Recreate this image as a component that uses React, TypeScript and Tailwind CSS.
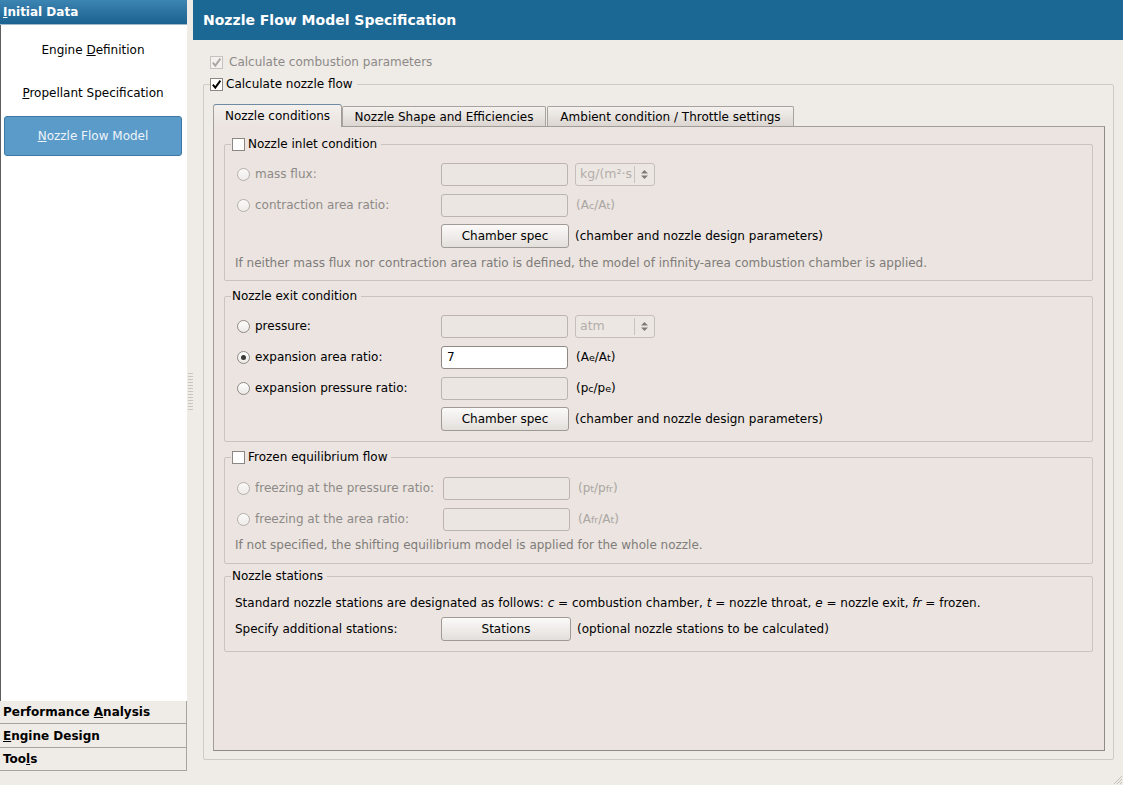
import React from "react";

function Check({ checked = false, disabled = false }: { checked?: boolean; disabled?: boolean }) {
  return (
    <span
      className={`inline-flex shrink-0 items-center justify-center w-[13px] h-[13px] border ${
        disabled ? "border-[#c6c2be] bg-[#f3f1ef]" : "border-[#8c8782] bg-white"
      }`}
    >
      {checked && (
        <svg width="11" height="11" viewBox="0 0 11 11">
          <path
            d="M1.8 5.6 L4.3 8.6 L9.4 1.6"
            fill="none"
            stroke={disabled ? "#aaa6a2" : "#000"}
            strokeWidth="1.9"
          />
        </svg>
      )}
    </span>
  );
}

function Radio({ checked = false, disabled = false }: { checked?: boolean; disabled?: boolean }) {
  return (
    <span
      className={`ml-[2px] inline-flex shrink-0 items-center justify-center w-[13px] h-[13px] rounded-full border ${
        disabled
          ? "border-[#b4afaa] bg-gradient-to-b from-[#fbfaf9] to-[#eeebe8]"
          : "border-[#8e8984] bg-gradient-to-b from-white to-[#ece9e6]"
      }`}
    >
      {checked && <span className="w-[5px] h-[5px] rounded-full bg-[#3a3a3a]" />}
    </span>
  );
}

function Field({ value = "", disabled = true, w = "w-[127px]" }: { value?: string; disabled?: boolean; w?: string }) {
  return (
    <div
      className={`${w} h-[23px] rounded-[3px] border flex items-center px-[5px] text-[12px] ${
        disabled ? "border-[#bab5b0] bg-[#ebe6e2]" : "border-[#8f8a85] bg-white text-black"
      }`}
    >
      {value}
    </div>
  );
}

function Btn({ label, w = "w-[128px]" }: { label: string; w?: string }) {
  return (
    <div
      className={`${w} h-[24px] rounded-[3px] border border-[#9f9a95] bg-gradient-to-b from-[#fbfaf9] to-[#e3dfdb] flex items-center justify-center text-black`}
    >
      {label}
    </div>
  );
}

function Combo({ text }: { text: string }) {
  return (
    <div className="ml-[7px] w-[80px] h-[23px] rounded-[3px] border border-[#c4bfba] bg-[#ece7e3] flex items-center text-[#b3aeaa]">
      <span className="pl-[4px] w-[58px] whitespace-nowrap text-[12.5px]">{text}</span>
      <span className="w-px h-[17px] bg-[#c9c4bf]" />
      <span className="flex-1 flex items-center justify-center">
        <svg width="9" height="11" viewBox="0 0 9 11">
          <path d="M1 4.5 L4.5 1 L8 4.5 Z" fill="#7f7a76" />
          <path d="M1 6.5 L4.5 10 L8 6.5 Z" fill="#7f7a76" />
        </svg>
      </span>
    </div>
  );
}

function Sub({ children }: { children: React.ReactNode }) {
  return <span className="text-[9.5px]">{children}</span>;
}

function RadioLabel({ label, checked = false, disabled = true, w = "w-[206px]" }: { label: string; checked?: boolean; disabled?: boolean; w?: string }) {
  return (
    <div className={`${w} flex items-center gap-[5px] ${disabled ? "text-[#8d8a87]" : "text-black"}`}>
      <Radio checked={checked} disabled={disabled} />
      <span>{label}</span>
    </div>
  );
}

function Group({ title, checkbox = false, children, className = "" }: { title: string; checkbox?: boolean; children: React.ReactNode; className?: string }) {
  return (
    <fieldset className={`border border-[#cac4bf] rounded-[2px] ${className}`}>
      <legend className="ml-[6px] pl-[1px] pr-[4px] leading-[16px]">
        <span className="flex items-center gap-[3px] text-black">
          {checkbox && <Check />}
          <span>{title}</span>
        </span>
      </legend>
      {children}
    </fieldset>
  );
}

export default function App() {
  return (
    <div className="w-[1123px] h-[785px] flex bg-[#efebe7] text-[12px] leading-[16px] font-['DejaVu_Sans',sans-serif] text-black overflow-hidden">
      {/* Sidebar */}
      <div className="w-[187px] flex flex-col">
        <div className="h-[25px] bg-gradient-to-b from-[#3c84b2] to-[#1a6291] border-b border-[#9fb8cb] flex items-center pl-[3px] text-white font-bold">
          <span>
            <span className="underline">I</span>nitial Data
          </span>
        </div>
        <div className="h-[676px] bg-white border-l border-[#5e5e5e] flex flex-col gap-[4px] pt-[5px] pl-[3px] pr-[5px]">
          <div className="h-[39px] flex items-center justify-center text-black">
            <span>
              Engine <span className="underline">D</span>efinition
            </span>
          </div>
          <div className="h-[39px] flex items-center justify-center text-black">
            <span>
              <span className="underline">P</span>ropellant Specification
            </span>
          </div>
          <div className="h-[40px] flex items-center justify-center rounded-[3px] border border-[#3f79a3] bg-[#5a9bc9] text-[#eef4fa]">
            <span>
              <span className="underline">N</span>ozzle Flow Model
            </span>
          </div>
        </div>
        <div className="flex flex-col border-r border-[#a8a39e]">
          <div className="h-[23px] border-b border-[#a8a39e] flex items-center pl-[3px] font-bold">
            <span>
              Performance <span className="underline">A</span>nalysis
            </span>
          </div>
          <div className="h-[24px] border-b border-[#a8a39e] flex items-center pl-[3px] font-bold">
            <span>
              <span className="underline">E</span>ngine Design
            </span>
          </div>
          <div className="h-[23px] border-b border-[#a8a39e] flex items-center pl-[3px] font-bold">
            <span>
              Too<span className="underline">l</span>s
            </span>
          </div>
        </div>
      </div>

      {/* Splitter */}
      <div className="w-[6px] flex items-center justify-center">
        <svg width="5" height="40" viewBox="0 0 5 40">
          {Array.from({ length: 13 }).map((_, i) => (
            <rect key={i} x="0" y={i * 3} width="5" height="1" fill="#c9c4bf" />
          ))}
        </svg>
      </div>

      {/* Main */}
      <div className="flex-1 flex flex-col relative">
        <div className="h-[40px] bg-[#1c6894] flex items-center pl-[10px] text-white font-bold text-[14px]">
          Nozzle Flow Model Specification
        </div>

        <div className="mt-[14px] h-[16px] ml-[17px] flex items-center gap-[6px] text-[#8d8a87]">
          <Check checked disabled />
          <span>Calculate combustion parameters</span>
        </div>

        <fieldset className="mt-[6px] ml-[10px] mr-[9px] border border-[#cfcac5] rounded-[2px] pl-[9px] pr-[8px] pt-[11px] pb-[8px]">
          <legend className="-ml-[3px] pr-[4px] leading-[16px]">
            <span className="flex items-center gap-[3px]">
              <Check checked />
              <span>Calculate nozzle flow</span>
            </span>
          </legend>

          {/* Tabs */}
          <div className="flex items-end h-[23px]">
            <div className="relative z-10 -mb-px w-[129px] h-[23px] rounded-t-[3px] border border-b-0 border-[#a39e99] border-t-[#6f8ba3] bg-gradient-to-b from-[#f4f0ed] to-[#ebe4e0] flex items-center justify-center pb-[1px]">
              Nozzle conditions
            </div>
            <div className="w-[204px] h-[20px] rounded-t-[2px] border border-b-0 border-[#a8a39e] bg-gradient-to-b from-[#f4f1ee] to-[#dcd6d1] flex items-center justify-center">
              Nozzle Shape and Efficiencies
            </div>
            <div className="ml-px w-[247px] h-[20px] rounded-t-[2px] border border-b-0 border-[#a8a39e] bg-gradient-to-b from-[#f4f1ee] to-[#dcd6d1] flex items-center justify-center">
              Ambient condition / Throttle settings
            </div>
          </div>

          {/* Pane */}
          <div className="h-[625px] border border-[#a29d98] border-b-[#8f8a86] border-r-[#8f8a86] bg-[#ebe4e0] pt-[9px] pl-[10px] pr-[11px] flex flex-col gap-[7px]">
            {/* Group 1 */}
            <Group title="Nozzle inlet condition" checkbox>
              <div className="pl-[10px] pt-[10px] pb-[9px] flex flex-col gap-[7px]">
                <div className="h-[24px] flex items-center">
                  <RadioLabel label="mass flux:" />
                  <Field />
                  <Combo text="kg/(m²·s" />
                </div>
                <div className="h-[24px] flex items-center">
                  <RadioLabel label="contraction area ratio:" />
                  <Field />
                  <span className="ml-[8px] text-[#aaa6a2]">
                    (A<Sub>c</Sub>/A<Sub>t</Sub>)
                  </span>
                </div>
                <div className="h-[24px] flex items-center">
                  <div className="w-[206px]" />
                  <Btn label="Chamber spec" />
                  <span className="ml-[6px]">(chamber and nozzle design parameters)</span>
                </div>
                <div className="h-[16px] text-[#7f7c79]">
                  If neither mass flux nor contraction area ratio is defined, the model of infinity-area combustion chamber is applied.
                </div>
              </div>
            </Group>

            {/* Group 2 */}
            <Group title="Nozzle exit condition">
              <div className="pl-[10px] pt-[10px] pb-[10px] flex flex-col gap-[7px]">
                <div className="h-[24px] flex items-center">
                  <RadioLabel label="pressure:" disabled={false} />
                  <Field />
                  <Combo text="atm" />
                </div>
                <div className="h-[24px] flex items-center">
                  <RadioLabel label="expansion area ratio:" checked disabled={false} />
                  <Field value="7" disabled={false} />
                  <span className="ml-[8px]">
                    (A<Sub>e</Sub>/A<Sub>t</Sub>)
                  </span>
                </div>
                <div className="h-[24px] flex items-center">
                  <RadioLabel label="expansion pressure ratio:" disabled={false} />
                  <Field />
                  <span className="ml-[8px]">
                    (p<Sub>c</Sub>/p<Sub>e</Sub>)
                  </span>
                </div>
                <div className="h-[24px] flex items-center">
                  <div className="w-[206px]" />
                  <Btn label="Chamber spec" />
                  <span className="ml-[6px]">(chamber and nozzle design parameters)</span>
                </div>
              </div>
            </Group>

            {/* Group 3 */}
            <Group title="Frozen equilibrium flow" checkbox>
              <div className="pl-[10px] pt-[11px] pb-[10px] flex flex-col gap-[7px]">
                <div className="h-[24px] flex items-center">
                  <RadioLabel label="freezing at the pressure ratio:" w="w-[208px]" />
                  <Field />
                  <span className="ml-[8px] text-[#aaa6a2]">
                    (p<Sub>t</Sub>/p<Sub>fr</Sub>)
                  </span>
                </div>
                <div className="h-[24px] flex items-center">
                  <RadioLabel label="freezing at the area ratio:" w="w-[208px]" />
                  <Field />
                  <span className="ml-[8px] text-[#aaa6a2]">
                    (A<Sub>fr</Sub>/A<Sub>t</Sub>)
                  </span>
                </div>
                <div className="h-[16px] -mt-px text-[#7f7c79]">
                  If not specified, the shifting equilibrium model is applied for the whole nozzle.
                </div>
              </div>
            </Group>

            {/* Group 4 */}
            <Group title="Nozzle stations" className="-mt-[3px]">
              <div className="pl-[10px] pt-[11px] pb-[10px] flex flex-col gap-[6px]">
                <div className="h-[16px]">
                  Standard nozzle stations are designated as follows: <i>c</i> = combustion chamber, <i>t</i> = nozzle throat,{" "}
                  <i>e</i> = nozzle exit, <i>fr</i> = frozen.
                </div>
                <div className="h-[24px] flex items-center">
                  <div className="w-[206px]">Specify additional stations:</div>
                  <Btn label="Stations" w="w-[130px]" />
                  <span className="ml-[6px]">(optional nozzle stations to be calculated)</span>
                </div>
              </div>
            </Group>
          </div>
        </fieldset>

        {/* size grip */}
        <svg className="absolute right-0 bottom-0" width="13" height="13" viewBox="0 0 13 13">
          <path d="M12 4 L4 12 M12 7 L7 12 M12 10 L10 12" stroke="#c4bfba" strokeWidth="1" />
        </svg>
      </div>
    </div>
  );
}
